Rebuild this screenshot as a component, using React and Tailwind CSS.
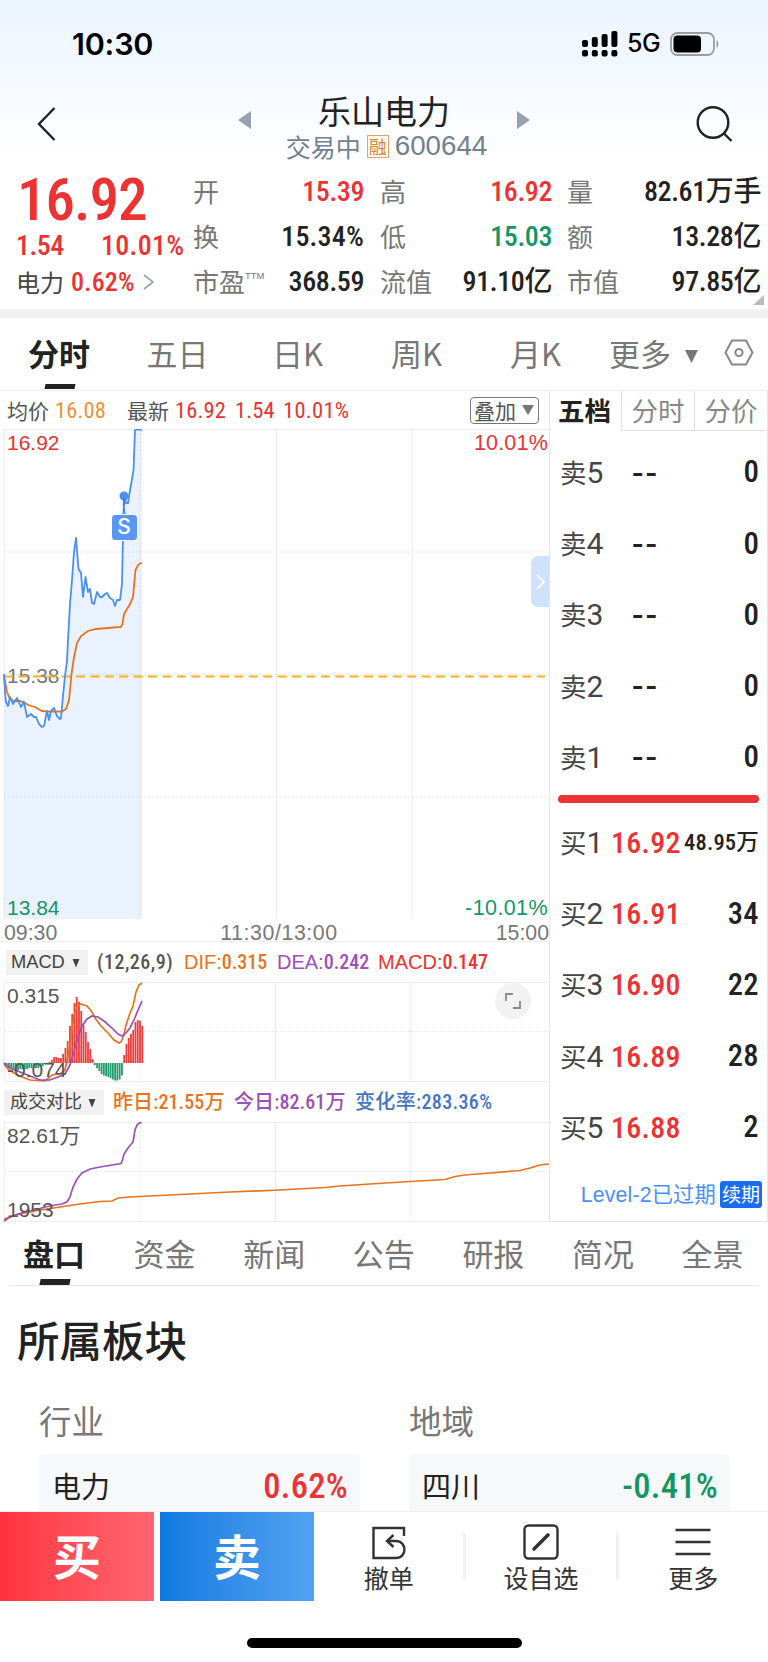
import { clsx } from "clsx";

const QUOTES = [
  { label: "开", value: "15.39", tone: "text-[#ec3232]" },
  { label: "高", value: "16.92", tone: "text-[#ec3232]" },
  { label: "量", value: "82.61万手", tone: "text-[#222]" },
  { label: "换", value: "15.34%", tone: "text-[#222]" },
  { label: "低", value: "15.03", tone: "text-[#129763]" },
  { label: "额", value: "13.28亿", tone: "text-[#222]" },
  { label: "市盈", sup: "TTM", value: "368.59", tone: "text-[#222]" },
  { label: "流值", value: "91.10亿", tone: "text-[#222]" },
  { label: "市值", value: "97.85亿", tone: "text-[#222]" },
];

const PERIODS = [
  { label: "五日", width: "w-[119px]" },
  { label: "日K", width: "w-[121px]" },
  { label: "周K", width: "w-[117px]" },
  { label: "月K", width: "w-[121px]" },
];

const SELLS = ["5", "4", "3", "2", "1"];

const BUYS = [
  { n: "1", price: "16.92", qty: "48.95万", small: true },
  { n: "2", price: "16.91", qty: "34" },
  { n: "3", price: "16.90", qty: "22" },
  { n: "4", price: "16.89", qty: "28" },
  { n: "5", price: "16.88", qty: "2" },
];

const SECTIONS = ["盘口", "资金", "新闻", "公告", "研报", "简况", "全景"];

const MACD_BARS = [
  -1, -3, -5, -6, -7, -7, -7, -6, -6, -6, -6, -5, -5, -5, -5, -5, -4, -3, -1, 0,
  1, 3, 6, 6, 5, 5, 9, 15, 22, 37, 49, 60, 66, 61, 52, 38, 31, 21, 14, 4,
  -2, -5, -8, -11, -12.5, -13, -14, -15, -16.5, -17.5, -17.5, -16.5, -12.5,
  8, 19, 25, 29, 33, 41, 43, 42, 37,
];

const PRICE =
  "4,674 5,693 6,702 8,706 10,697 13,704 17,698 21,707 24,702 27,717 31,714 34,717 36,717 39,724 42,727 44,726 47,711 49,720 51,711 54,708 57,716 60,719 61,718 63,696 65,676 67,661 68,640 69,622 70,604 72,580 74,552 76,538 78.5,569 81,573 83,597 85.5,577 88,592 90,589 92,603 94,604 97,592 100,597 102,597 105,594 107,593 110,598 113,600 115,606 117,600 120,600 122,584 123,535 124,495 126,503 128,503 129,496 131,485 133.5,470 135,430 136,429.5 142,429.5";
const AVERAGE =
  "4,676 7,692 10,699 14,701 20,701 25,703 28,705 35,707 42,711 48,711.5 62,711.5 66,709 69,700 70,690 71.5,674 74,657 77,643 81,636 88,631 96,629 108,628 121,627 122.5,624 124,614 127,609 130,604 133,597 134,586 135.5,570 138,565 140,563.5 142,563";
const DIF =
  "4,1064 8,1069 14,1073 22,1077 30,1080 38,1080.5 45,1081 52,1075 60,1074 65,1070 67,1060 70,1045 72,1030 74,1015 77,1007 80,1004 84,1005 87,1006 92,1012 95,1018 101,1026 108,1033 114,1040 119,1043 121,1042 124,1035 126,1025 130,1013 133,1006 136,992 139,985 142,983";
const DEA =
  "4,1063 10,1068 20,1072 30,1076 40,1080 50,1080 58,1077 65,1074 70,1065 74,1052 78,1037 82,1026 87,1019 92,1016 98,1017 104,1021 112,1028 118,1034 122,1036 126,1033 130,1028 134,1020 138,1010 142,1001";
const TODAY =
  "4,1221 10,1217 18,1214 25,1212 35,1210 45,1207 55,1205 62,1204 67,1202 70,1197 73,1187 77,1179 82,1173 90,1169 100,1167 121,1163.5 122.5,1160 124,1154 128,1148 133,1142 135,1130 137,1125 140,1122.5 142,1122.5";
const YESTERDAY =
  "4,1219 10,1217 20,1214 30,1212 40,1210 60,1207 80,1204 100,1201.5 112,1201 118,1198 130,1197 150,1196 180,1194.5 230,1192 280,1190 325,1187.5 340,1186 370,1184 410,1181.5 445,1179.5 455,1176.5 465,1175 490,1173 520,1170.5 530,1168 540,1165 549,1164";

function StatusBar() {
  return (
    <div className="flex h-[86px] items-center justify-between pt-[2px] pl-[72px] pr-[49px]">
      <span className="font-[Inter] text-[30.5px] font-semibold tracking-[-0.2px] text-black">10:30</span>
      <div className="flex items-center">
        <svg width="36" height="26" viewBox="0 0 36 26">
          {[9, 6, 3, 0].map((top, i) => (
            <g key={top}>
              <rect x={i * 9.8} y={top} width="6" height={16 - top} rx="2" />
              <rect x={i * 9.8} y="19" width="6" height="6.5" rx="2" />
            </g>
          ))}
        </svg>
        <span className="ml-[9px] w-[43px] font-[Inter] text-[25px] font-medium tracking-[-0.5px] text-black">5G</span>
        <svg width="49" height="24" viewBox="0 0 49 24">
          <rect x="1" y="1" width="43" height="22" rx="6.5" fill="none" stroke="#9a9ca0" strokeWidth="1.8" />
          <rect x="3.5" y="3.5" width="27.5" height="17" rx="4" />
          <path d="M46.5 8 C49 9.5 49 14.5 46.5 16 Z" fill="#9a9ca0" />
        </svg>
      </div>
    </div>
  );
}

function Header() {
  return (
    <div className="flex h-[74px] justify-between pl-[37px] pr-[35px]">
      <svg className="mt-[21px]" width="19" height="34" viewBox="0 0 19 34" fill="none" stroke="#222" strokeWidth="2.4">
        <path d="M17.5 1 L2 17 L17.5 33" />
      </svg>
      <div className="flex flex-col items-center pl-[16px]">
        <div className="flex items-start">
          <svg className="mt-[25px]" width="13" height="18" viewBox="0 0 13 18">
            <path d="M13 0 V18 L0 9 Z" fill="#98a2af" />
          </svg>
          <span className="mx-[67px] h-[46px] text-[33px] leading-[49px] text-[#222]">乐山电力</span>
          <svg className="mt-[25px]" width="13" height="18" viewBox="0 0 13 18">
            <path d="M0 0 V18 L13 9 Z" fill="#98a2af" />
          </svg>
        </div>
        <div className="flex h-[28px] items-center pl-[5px] text-[#728091]">
          <span className="text-[25px] leading-[24px]">交易中</span>
          <span className="mx-[6px] flex h-[23px] w-[22px] items-center justify-center border border-[#e8a468] text-[18px] leading-[20px] text-[#d9822b]">
            融
          </span>
          <span className="font-['Liberation_Sans'] text-[27.7px] leading-[28px]">600644</span>
        </div>
      </div>
      <svg className="mt-[20px]" width="37" height="36" viewBox="0 0 37 36" fill="none" stroke="#222" strokeWidth="2.4">
        <circle cx="17" cy="16.5" r="15.3" />
        <path d="M28 27.5 L35.5 35" />
      </svg>
    </div>
  );
}

function Quote() {
  return (
    <div className="relative flex h-[149px] pt-[9px]">
      <div className="w-[193px] pl-[16px] text-[#ec3232]">
        <div className="num h-[60px] pl-[1px] text-[59px] font-medium leading-[62px] tracking-[-1px]">16.92</div>
        <div className="num flex h-[31px] text-[28px] font-medium leading-[33px]">
          <span className="w-[85px] tracking-[-0.5px]">1.54</span>
          <span className="tracking-[0.3px]">10.01%</span>
        </div>
        <div className="flex h-[44px] items-center">
          <span className="w-[55px] text-[24px] text-[#444]">电力</span>
          <span className="num w-[72px] text-[26px] font-medium tracking-[0.2px]">0.62%</span>
          <svg width="11" height="16" viewBox="0 0 11 16" fill="none" stroke="#98a2af" strokeWidth="1.6">
            <path d="M1 1 L10 8 L1 15" />
          </svg>
        </div>
      </div>
      <div className="grid h-[135px] grid-cols-[171px_188px_192px]">
        {QUOTES.map((q, i) => (
          <div
            key={q.label}
            className={clsx("flex h-[45px] items-center justify-between", i % 3 === 1 && "pl-[16px]", i % 3 === 2 && "w-[209px] pl-[15px]")}
          >
            <span className="flex h-[42px] text-[26px] leading-[40px] text-[#777]">
              {q.label}
              {q.sup && <sup className="top-0 pt-[10px] font-['Liberation_Sans'] text-[9.5px] leading-[10px]">{q.sup}</sup>}
            </span>
            <span
              className={clsx(
                "num h-[40px] text-[28px] font-medium leading-[40px]",
                q.value.endsWith("%") ? "tracking-[0.2px]" : "tracking-[-0.4px]",
                q.tone
              )}
            >
              {q.value}
            </span>
          </div>
        ))}
      </div>
      <svg className="absolute bottom-[4px] right-[4px]" width="11" height="10">
        <path d="M11 0 V10 H0 Z" fill="#bbb" />
      </svg>
    </div>
  );
}

function PeriodTabs() {
  return (
    <div className="flex h-[73px] border-b border-[#eceef5] text-[31px] leading-[69px] text-[#777]">
      <div className="flex w-[118px] flex-col items-center">
        <span className="h-[66px] font-bold text-[#222]">分时</span>
        <span className="ml-[2px] h-[5px] w-[30px] -skew-x-12 bg-[#222]" />
      </div>
      {PERIODS.map((p) => (
        <span key={p.label} className={clsx("text-center", p.width)}>
          {p.label}
        </span>
      ))}
      <span className="ml-[13px]">更多</span>
      <svg className="ml-[14px] mt-[32px]" width="13" height="13">
        <path d="M0 0 H13 L6.5 13 Z" fill="#777" />
      </svg>
      <svg className="ml-[26px] mt-[21px]" width="30" height="27" viewBox="0 0 30 27" fill="none" stroke="#888" strokeWidth="2">
        <path d="M8 1.5 H22 L28.5 13.5 L22 25.5 H8 L1.5 13.5 Z" />
        <circle cx="15" cy="13.5" r="3.6" />
      </svg>
    </div>
  );
}

function Grid({ top, mid, bottom, x = [140, 275.5, 410.5] }) {
  return (
    <g stroke="#ebebf0" fill="none">
      <path d={`M4 ${top} H549 M${x[1]} ${top} V${bottom}`} />
      <path d={`M4.5 ${top} V${bottom} M${x[0]} ${top} V${bottom} M${x[2]} ${top} V${bottom}`} strokeDasharray="2 2" stroke="#e6e6ee" />
      {mid.map((y) => (
        <path key={y} d={`M4 ${y} H549`} strokeDasharray="2 2" stroke="#e6e6ee" />
      ))}
    </g>
  );
}

function PriceChart() {
  return (
    <>
      <div className="flex h-[38px] items-center pl-[7px] pr-[10px] text-[21px] leading-[36px] text-[#555]">
        <span className="w-[48px]">均价</span>
        <span className="num w-[72px] text-[22.5px] tracking-[0.1px] text-[#ee9233]">16.08</span>
        <span className="w-[48px]">最新</span>
        <span className="num w-[60px] text-[22.5px] tracking-[0.1px] text-[#ec3232]">16.92</span>
        <span className="num w-[48px] text-[22.5px] tracking-[0.1px] text-[#ec3232]">1.54</span>
        <span className="num text-[22.5px] tracking-[0.3px] text-[#ec3232]">10.01%</span>
        <span className="ml-auto flex h-[27px] w-[69px] items-center rounded-[4px] border border-[#777] pl-[3px] leading-[23px]">
          叠加
          <svg className="ml-[6px]" width="12" height="10">
            <path d="M0 0 H12 L6 10 Z" fill="#777" />
          </svg>
        </span>
      </div>
      <div className="relative h-[490px] font-['Liberation_Sans'] text-[21px] leading-[24px]">
        <svg className="block" width="549" height="490" viewBox="0 429 549 490">
          <Grid top={429.5} mid={[552, 797]} bottom={919} x={[140, 276.5, 412.5]} />
          <path d="M4 674.5 H549" stroke="#eef0f6" />
          <polygon points={`4,919 ${PRICE} 142,919`} fill="#4a8cff" fillOpacity="0.11" />
        </svg>
        <span className="absolute left-[7px] top-[2px] text-[#ec3232]">16.92</span>
        <span className="absolute right-[1px] top-[2px] text-[21.5px] tracking-[0.2px] text-[#ec3232]">10.01%</span>
        <span className="absolute left-[7px] top-[235px] text-[#777]">15.38</span>
        <span className="absolute -bottom-px left-[7px] text-[#129763]">13.84</span>
        <span className="absolute -bottom-px right-[1px] text-[21.5px] tracking-[0.4px] text-[#129763]">-10.01%</span>
        <svg className="absolute inset-0" width="549" height="490" viewBox="0 429 549 490" fill="none">
          <path d="M4 676.5 H545" stroke="#fbb11b" strokeWidth="2" strokeDasharray="9 5.4" />
          <polyline points={AVERAGE} stroke="#e8731c" strokeWidth="1.8" />
          <polyline points={PRICE} stroke="#4a8ff5" strokeWidth="1.8" strokeLinejoin="round" />
          <circle cx="124" cy="496" r="4.5" fill="#4a8ff5" />
          <path d="M124 498 V512" stroke="#2f7af0" strokeWidth="1.6" strokeDasharray="8 2" />
          <path d="M119.5 516 L124 511 L128.5 516 Z" fill="#5897f3" />
        </svg>
        <span className="absolute left-[110.5px] top-[84.5px] flex h-[27px] w-[27px] items-center justify-center rounded-[4px] border border-white bg-[#5897f3] font-[Inter] text-[21px] font-medium text-white">
          S
        </span>
        <span className="absolute right-0 top-[127px] flex h-[51px] w-[18px] items-center justify-center rounded-l-[7px] bg-[#cfe1fc]">
          <svg width="9" height="16" viewBox="0 0 9 16" fill="none" stroke="#fff" strokeWidth="1.6">
            <path d="M1 1 L8 8 L1 15" />
          </svg>
        </span>
      </div>
      <div className="flex h-[23px] justify-between border-b border-[#ebebf0] pl-[4px] font-['Liberation_Sans'] text-[21.3px] leading-[28px] text-[#777]">
        <span>09:30</span>
        <span className="pl-[5px] tracking-[0.6px]">11:30/13:00</span>
        <span>15:00</span>
      </div>
    </>
  );
}

function Picker({ children, className }) {
  return (
    <span className={clsx("flex h-[25px] items-center justify-between bg-[#f1f1f1] leading-[24px] text-[#444]", className)}>
      {children}
      <svg className="mt-[2px]" width="8" height="9">
        <path d="M0.5 0 H7.5 L4 8.5 Z" fill="#444" />
      </svg>
    </span>
  );
}

function MacdChart() {
  return (
    <>
      <div className="flex h-[40px] items-center pl-[6px] font-['Liberation_Sans'] text-[20px]">
        <Picker className="w-[82px] pl-[5px] pr-[8px] text-[18.3px]">MACD</Picker>
        <span className="num ml-[9px] w-[87px] font-medium tracking-[0.5px] text-[#555]">(12,26,9)</span>
        <span className="w-[93px] text-[#e8731c]">
          DIF:<b className="num font-medium">0.315</b>
        </span>
        <span className="w-[101px] text-[#9c4fb8]">
          DEA:<b className="num font-medium">0.242</b>
        </span>
        <span className="text-[#ec3232]">
          MACD:<b className="num font-medium">0.147</b>
        </span>
      </div>
      <div className="relative h-[100px] font-['Liberation_Sans'] text-[21px] leading-[24px] text-[#555]">
        <svg className="block" width="549" height="100" viewBox="0 982 549 100" fill="none">
          <Grid top={982.5} mid={[1031.5]} bottom={1081.5} />
          <path d="M4 1081.5 H549" stroke="#ebebf0" />
          {MACD_BARS.map((v, i) => (
            <rect
              key={i}
              x={3.5 + i * 2.26}
              y={v > 0 ? 1063 - v : 1063}
              width="1.8"
              height={Math.abs(v)}
              fill={v > 0 ? "#ee3b3b" : "#1f9e6c"}
            />
          ))}
          <polyline points={DIF} stroke="#e8731c" strokeWidth="1.7" />
          <polyline points={DEA} stroke="#9c4fb8" strokeWidth="1.7" />
        </svg>
        <span className="absolute left-[7px] top-[2px]">0.315</span>
        <span className="absolute left-[7px] top-[76px]">-0.074</span>
        <span className="absolute right-[18px] top-[1px] flex size-[36px] items-center justify-center rounded-full bg-[#f2f2f2]">
          <svg width="16" height="16" fill="none" stroke="#888" strokeWidth="1.8">
            <path d="M1 8 V1 H8 M15 8 V15 H8" />
          </svg>
        </span>
      </div>
    </>
  );
}

function VolumeChart() {
  return (
    <>
      <div className="num flex h-[40px] items-center pl-[4px] text-[20px] font-medium">
        <Picker className="w-[100px] pl-[6px] pr-[8px] text-[18px] font-normal">成交对比</Picker>
        <span className="ml-[9px] w-[121px] tracking-[0.1px] text-[#e8731c]">昨日:21.55万</span>
        <span className="w-[121px] tracking-[0.1px] text-[#9c4fb8]">今日:82.61万</span>
        <span className="tracking-[0.35px] text-[#4474c4]">变化率:283.36%</span>
      </div>
      <div className="relative h-[100px] font-['Liberation_Sans','Noto_Sans_CJK_SC'] text-[21px] leading-[24px] text-[#555]">
        <svg className="block" width="549" height="100" viewBox="0 1122 549 100" fill="none">
          <Grid top={1122.5} mid={[1171.5]} bottom={1221.5} />
          <path d="M4 1221.5 H549" stroke="#ebebf0" />
          <polyline points={YESTERDAY} stroke="#e8731c" strokeWidth="1.7" />
          <polyline points={TODAY} stroke="#9c4fb8" strokeWidth="1.7" />
        </svg>
        <span className="absolute left-[7px] top-[2px]">82.61万</span>
        <span className="absolute left-[7px] top-[76px]">1953</span>
      </div>
    </>
  );
}

function OrderBook() {
  return (
    <div className="flex w-[219px] flex-col border-x border-b border-[#e6e6ee] text-[#222]">
      <div className="flex h-[40px] text-[26.5px] leading-[38px] text-[#888]">
        <span className="w-[71px] pl-[8px] font-bold text-[#222]">五档</span>
        <span className="w-[73px] border-b border-l border-[#e0e0e4] text-center">分时</span>
        <span className="w-[73px] border-b border-l border-[#e0e0e4] text-center">分价</span>
      </div>
      <div className="mt-[6px] flex flex-col pl-[10px] pr-[8px]">
        {SELLS.map((n) => (
          <div key={n} className="flex h-[71.2px] items-center">
            <span className="w-[72px] text-[26.5px] text-[#444]">
              卖<span className="num-wide text-[30px]">{n}</span>
            </span>
            <span className="num-wide text-[34px] font-medium leading-[34px] tracking-[2px]">--</span>
            <span className="num ml-auto text-[31px] font-medium">0</span>
          </div>
        ))}
      </div>
      <div className="mx-[8px] mt-[2px] h-[8px] rounded-full bg-[#ec3232]" />
      <div className="mt-[4px] flex flex-col pl-[10px] pr-[8px]">
        {BUYS.map((b) => (
          <div key={b.n} className="flex h-[71.2px] items-center">
            <span className="w-[51px] shrink-0 text-[26.5px] text-[#444]">
              买<span className="num-wide text-[30px]">{b.n}</span>
            </span>
            <span className="num text-[30px] font-medium tracking-[0.3px] text-[#ec3232]">{b.price}</span>
            <span
              className={clsx(
                "num ml-auto whitespace-nowrap font-medium",
                b.small ? "text-[22.5px] tracking-[0.2px]" : "text-[30.5px] tracking-[0.4px]"
              )}
            >
              {b.qty}
            </span>
          </div>
        ))}
      </div>
      <div className="mt-[18px] flex h-[28px] items-center justify-end pr-[5px]">
        <span className="font-['Liberation_Sans','Noto_Sans_CJK_SC'] text-[21.3px] leading-[28px] tracking-[0.15px] text-[#4a90fb]">Level-2已过期</span>
        <span className="ml-[4px] h-[27px] w-[42px] rounded-[3px] bg-[#176ef5] text-center text-[19px] leading-[26px] text-white">续期</span>
      </div>
    </div>
  );
}

function Sector({ title, name, change, tone }) {
  return (
    <div className="w-[321px]">
      <div className="h-[65px] text-[32.5px] leading-[62px] text-[#777]">{title}</div>
      <div className="flex h-[57px] items-center justify-between rounded-t-[5px] bg-[#f7f8fa] pl-[13px] pr-[12px] pt-[6px]">
        <span className="text-[29px] text-[#222]">{name}</span>
        <span className={clsx("num pt-[2px] text-[34.5px] font-medium tracking-[0.3px]", tone)}>{change}</span>
      </div>
    </div>
  );
}

function Action({ label, children }) {
  return (
    <div className="flex flex-1 flex-col items-center">
      <div className="flex h-[47px] items-end pb-[2px]">{children}</div>
      <span className="h-[37px] text-[25px] leading-[31px] text-[#333]">{label}</span>
    </div>
  );
}

function TradeBar() {
  return (
    <div className="flex h-[151px] flex-col justify-between border-t border-[#eee] bg-white">
      <div className="flex h-[89px] items-stretch">
        <div className="mr-[6px] w-[154px] bg-gradient-to-r from-[#ff313e] to-[#ff6570] text-center text-[48px] font-bold leading-[85px] text-white">买</div>
        <div className="w-[154px] bg-gradient-to-r from-[#0b7ae0] to-[#51a2f1] text-center text-[48px] font-bold leading-[85px] text-white">卖</div>
        <div className="flex flex-1 items-center">
          <Action label="撤单">
            <svg width="34" height="34" viewBox="0 0 34 34" fill="none" stroke="#333" strokeWidth="2.4">
              <path d="M32 10 V2 H1.5 V32 H24 C35.5 32 35 15 24 15 H15" />
              <path d="M21.5 9 L15 15 L21.5 21" />
            </svg>
          </Action>
          <div className="h-[47px] w-[3px] bg-[#f2f2f2]" />
          <Action label="设自选">
            <svg width="36" height="36" viewBox="0 0 36 36" fill="none" stroke="#333" strokeWidth="2.4">
              <rect x="1.5" y="1.5" width="33" height="33" rx="4" />
              <path d="M11 25 L25 11" strokeWidth="3.6" strokeLinecap="round" />
            </svg>
          </Action>
          <div className="h-[47px] w-[3px] bg-[#f2f2f2]" />
          <Action label="更多">
            <svg width="36" height="33" viewBox="0 0 36 33" stroke="#333" strokeWidth="2.4">
              <path d="M0.5 3 H35.5 M0.5 15 H35.5 M0.5 27 H35.5" />
            </svg>
          </Action>
        </div>
      </div>
      <div className="mb-[14px] h-[10px] w-[275px] self-center rounded-full bg-black" />
    </div>
  );
}

export default function App() {
  return (
    <div className="flex h-[1662px] w-[768px] flex-col overflow-hidden bg-white font-['Noto_Sans_CJK_SC',sans-serif]">
      <div className="bg-gradient-to-b from-[#ebf4ff] to-white">
        <StatusBar />
        <Header />
      </div>
      <Quote />
      <div className="h-[9px] bg-[#f2f2f2]" />
      <PeriodTabs />
      <div className="flex h-[831px]">
        <div className="w-[549px]">
          <PriceChart />
          <MacdChart />
          <VolumeChart />
        </div>
        <OrderBook />
      </div>
      <div className="mx-[9px] flex h-[64px] border-b border-[#e8e8e8] text-[31px] leading-[62px] text-[#777]">
        {SECTIONS.map((s, i) => (
          <div key={s} className="flex w-[109.6px] shrink-0 flex-col items-start pl-[15px]">
            <span className={clsx("h-[57px]", i === 0 && "-ml-[1px] font-bold text-[#222]")}>{s}</span>
            {i === 0 && <span className="ml-[16px] h-[6px] w-[30px] -skew-x-12 bg-[#222]" />}
          </div>
        ))}
      </div>
      <h2 className="h-[103px] pl-[17px] text-[42.5px] font-medium leading-[106px] text-[#222]">所属板块</h2>
      <div className="flex h-[122px] gap-[49px] pl-[39px]">
        <Sector title="行业" name="电力" change="0.62%" tone="text-[#ec3232]" />
        <Sector title="地域" name="四川" change="-0.41%" tone="text-[#129763]" />
      </div>
      <TradeBar />

      <style>{`
        .num, .num-wide {
          font-family: Roboto, "Noto Sans CJK SC", sans-serif;
        }
        .num {
          font-stretch: 87%;
        }
      `}</style>
    </div>
  );
}
